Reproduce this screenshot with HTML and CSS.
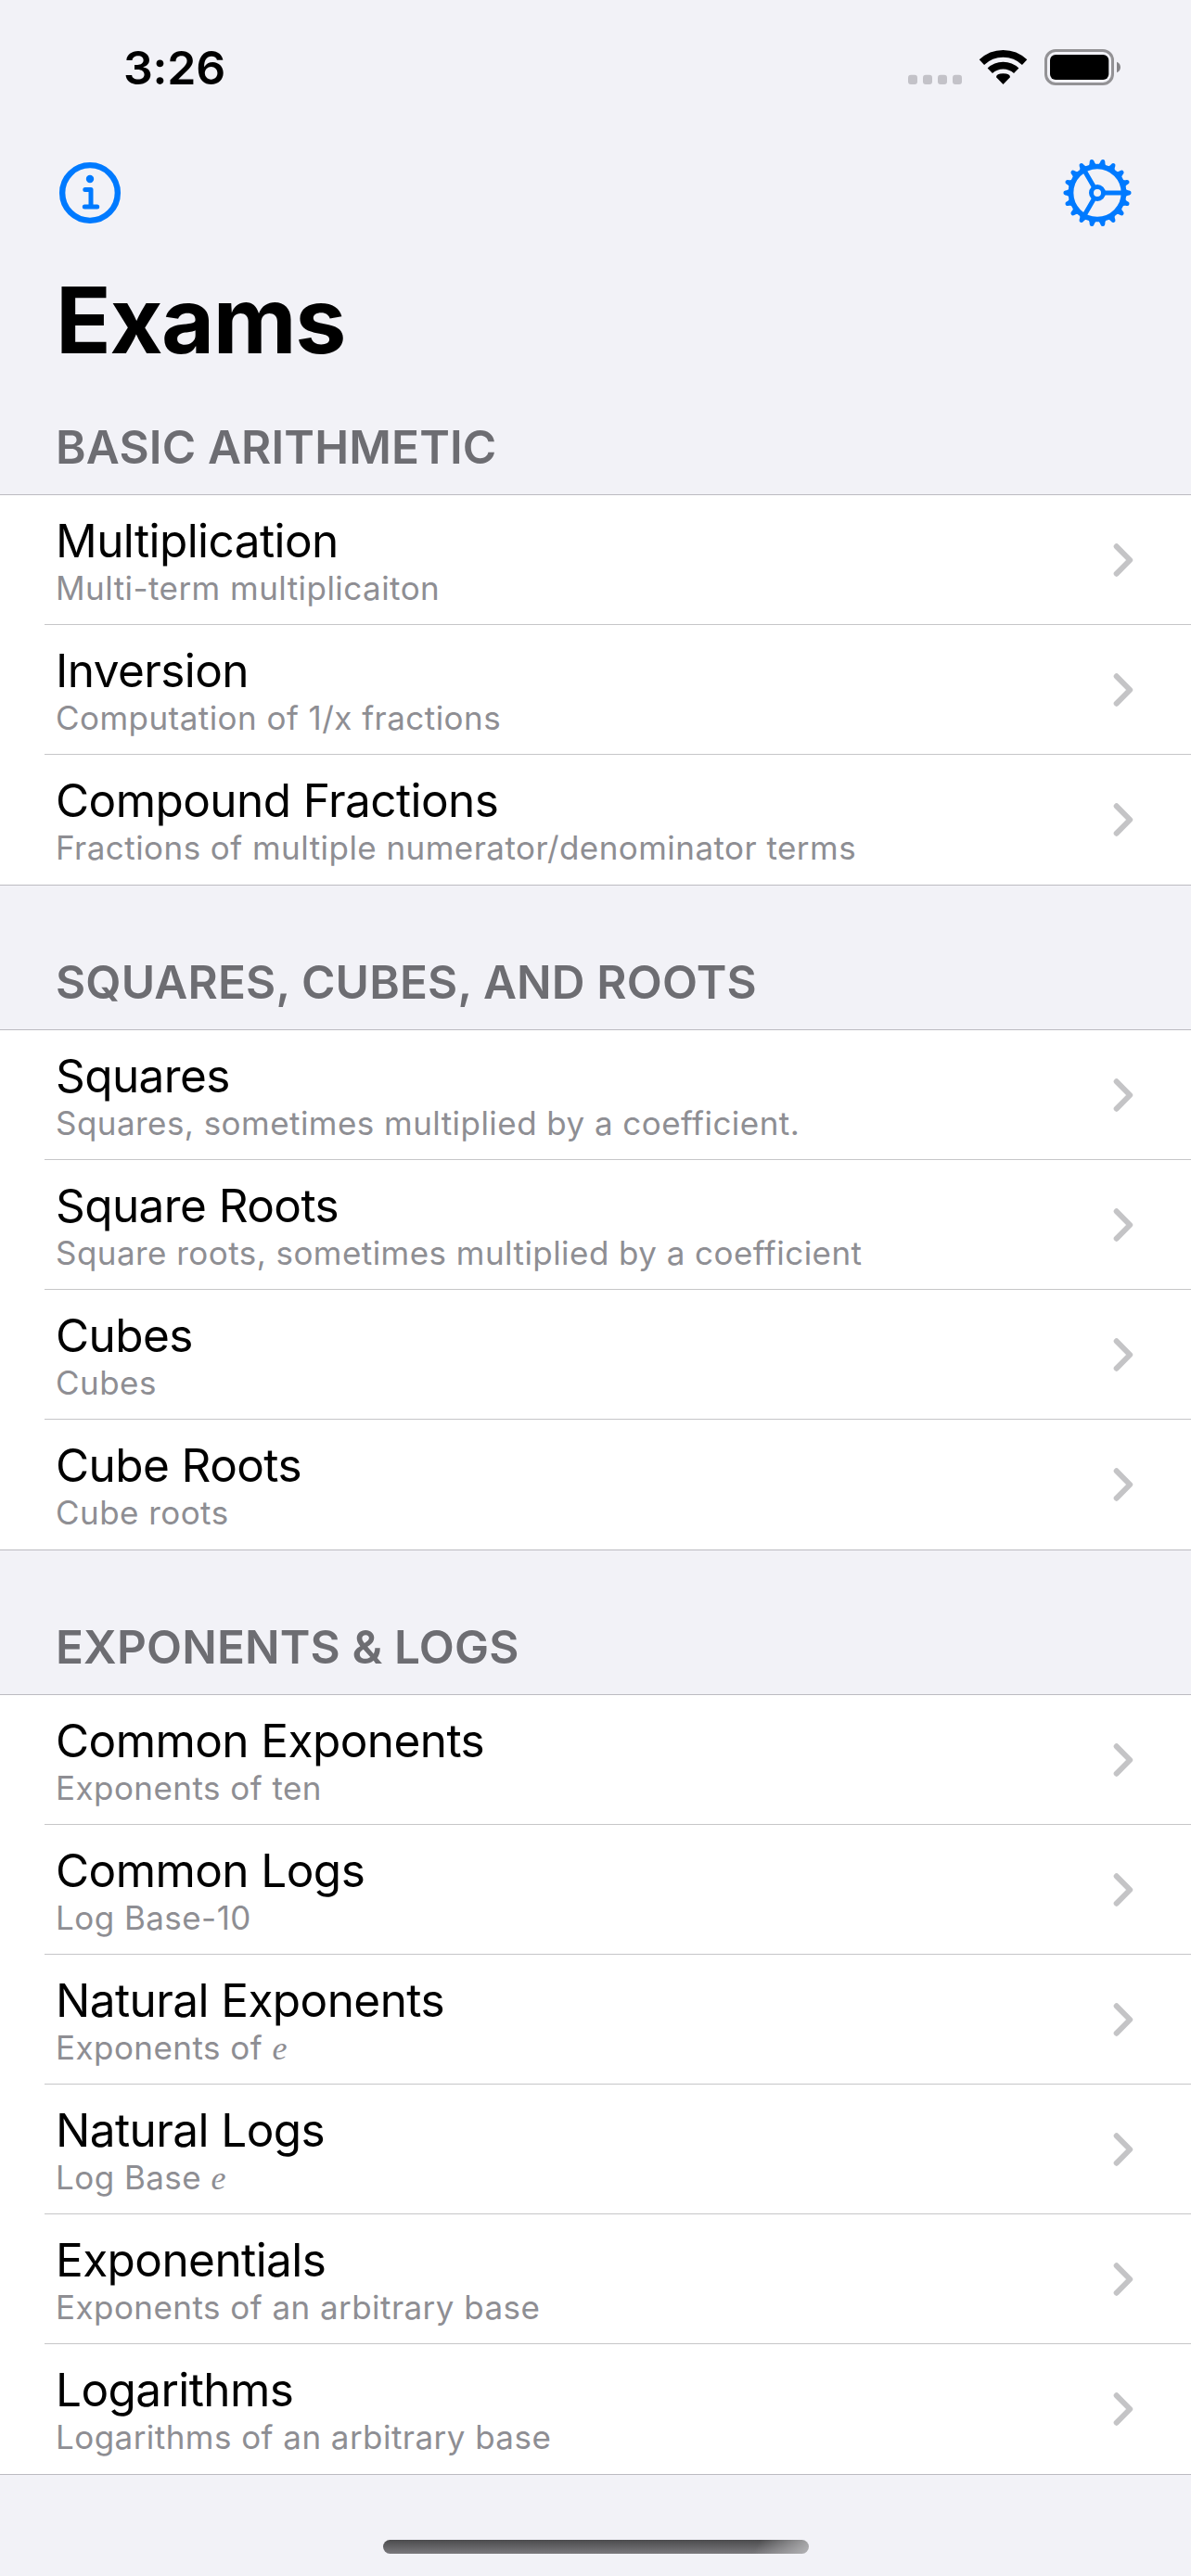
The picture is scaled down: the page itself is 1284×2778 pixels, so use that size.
FILE: index.html
```html
<!DOCTYPE html>
<html lang="en">
<head>
<meta charset="utf-8">
<title>Exams</title>
<link rel="stylesheet" href="styles.css">
</head>
<body>
<svg class="defs" width="0" height="0" aria-hidden="true">
  <symbol id="chevron" viewBox="0 0 24 40"><path d="M5.700 5.300 20.200 20 5.700 34.700" fill="none" stroke="#c4c4c6" stroke-width="6" stroke-linecap="round" stroke-linejoin="round"/></symbol>
</svg>
<div class="screen">
  <header class="status">
    <span class="time">3:26</span>
    <svg class="status-icons" viewBox="0 0 232 44" width="232" height="44" aria-hidden="true">
      <g fill="#c3c2c8">
        <rect x="2" y="30.700" width="10" height="10.300" rx="3"/><rect x="18" y="30.700" width="10" height="10.300" rx="3"/>
        <rect x="34" y="30.700" width="10" height="10.300" rx="3"/><rect x="50" y="30.700" width="10" height="10.300" rx="3"/>
      </g>
      <path d="M81.400 17.100a33.400 33.400 0 0 1 46.200 0M90.300 26.300a20.500 20.500 0 0 1 28.400 0" fill="none" stroke="#000" stroke-width="7.700"/>
      <path d="M104.500 41 97 33.200Q97 29.300 104.500 29.300T112 33.200Z"/>
      <rect x="150.500" y="4.500" width="72" height="36" rx="10.500" fill="none" stroke="#939295" stroke-width="3"/>
      <rect x="155" y="9" width="63.300" height="27" rx="6"/>
      <path d="M227 16.700C232.300 18.600 232.300 26.400 227 28.300Z" fill="#858487"/>
    </svg>
  </header>
  <nav class="nav">
    <svg width="80" height="80" viewBox="-40 -40 80 80" fill="none" stroke="#007aff" stroke-linecap="round" stroke-linejoin="round">
      <circle r="29.850" stroke-width="6.400"/>
      <path d="M-5.200-3.500H1V15M-5.700 15H7.700" stroke-width="5"/>
      <circle cy="-15" r="4.200" fill="#007aff" stroke="none"/>
    </svg>
    <svg width="80" height="80" viewBox="-40 -40 80 80" fill="#007aff">
      <g id="half">
        <g id="third"><path id="tooth" d="M-5-29.500C-3.200-31.300-2.700-32.500-2.400-34.500Q-2-36.600 0-36.600T2.400-34.500C2.700-32.500 3.200-31.300 5-29.500Z" transform="rotate(90)"/><use href="#tooth" transform="rotate(20)"/><use href="#tooth" transform="rotate(40)"/></g>
        <use href="#third" transform="rotate(60)"/><use href="#third" transform="rotate(120)"/>
      </g>
      <use href="#half" transform="rotate(180)"/>
      <g fill="none" stroke="#007aff">
        <circle r="28.500" stroke-width="5.700"/>
        <circle r="6.500" stroke-width="5"/>
        <path d="M8 0H28M-4-6.930-14-24.250M-4 6.930-14 24.250" stroke-width="5"/>
      </g>
    </svg>
  </nav>
  <h1 class="title">Exams</h1>

  <section>
    <h2 class="heading first">BASIC ARITHMETIC</h2>
    <ul class="list">
      <li class="row"><div class="text"><span class="name">Multiplication</span><span class="detail">Multi-term multiplicaiton</span></div><svg class="chev"><use href="#chevron"/></svg></li>
      <li class="row"><div class="text"><span class="name">Inversion</span><span class="detail">Computation of 1/x fractions</span></div><svg class="chev"><use href="#chevron"/></svg></li>
      <li class="row"><div class="text"><span class="name">Compound Fractions</span><span class="detail">Fractions of multiple numerator/denominator terms</span></div><svg class="chev"><use href="#chevron"/></svg></li>
    </ul>
  </section>
  <section>
    <h2 class="heading">SQUARES, CUBES, AND ROOTS</h2>
    <ul class="list">
      <li class="row"><div class="text"><span class="name">Squares</span><span class="detail">Squares, sometimes multiplied by a coefficient.</span></div><svg class="chev"><use href="#chevron"/></svg></li>
      <li class="row"><div class="text"><span class="name">Square Roots</span><span class="detail">Square roots, sometimes multiplied by a coefficient</span></div><svg class="chev"><use href="#chevron"/></svg></li>
      <li class="row"><div class="text"><span class="name">Cubes</span><span class="detail">Cubes</span></div><svg class="chev"><use href="#chevron"/></svg></li>
      <li class="row"><div class="text"><span class="name">Cube Roots</span><span class="detail">Cube roots</span></div><svg class="chev"><use href="#chevron"/></svg></li>
    </ul>
  </section>
  <section>
    <h2 class="heading">EXPONENTS &amp; LOGS</h2>
    <ul class="list">
      <li class="row"><div class="text"><span class="name">Common Exponents</span><span class="detail">Exponents of ten</span></div><svg class="chev"><use href="#chevron"/></svg></li>
      <li class="row"><div class="text"><span class="name">Common Logs</span><span class="detail">Log Base-10</span></div><svg class="chev"><use href="#chevron"/></svg></li>
      <li class="row"><div class="text"><span class="name">Natural Exponents</span><span class="detail">Exponents of <i class="e">e</i></span></div><svg class="chev"><use href="#chevron"/></svg></li>
      <li class="row"><div class="text"><span class="name">Natural Logs</span><span class="detail">Log Base <i class="e">e</i></span></div><svg class="chev"><use href="#chevron"/></svg></li>
      <li class="row"><div class="text"><span class="name">Exponentials</span><span class="detail">Exponents of an arbitrary base</span></div><svg class="chev"><use href="#chevron"/></svg></li>
      <li class="row"><div class="text"><span class="name">Logarithms</span><span class="detail">Logarithms of an arbitrary base</span></div><svg class="chev"><use href="#chevron"/></svg></li>
    </ul>
  </section>
  <footer class="home"><div class="indicator"></div></footer>
</div>
</body>
</html>
```
FILE: styles.css
```css
* { box-sizing: border-box; }
body { margin: 0; background: #f2f2f7; }
.defs { display: block; height: 0; }
.screen {
  width: 1284px;
  height: 2778px;
  display: flex;
  flex-direction: column;
  overflow: hidden;
  font-family: Inter, "Liberation Sans", sans-serif;
  color: #000;
}
.status {
  height: 150px;
  padding: 43px 75px 0 133px;
  display: flex;
  justify-content: space-between;
  align-items: flex-start;
  flex: none;
}
.time {
  font-size: 50px;
  line-height: 60px;
  font-weight: 600;
  letter-spacing: -0.200px;
}
.status-icons { margin-top: 7px; }
.nav {
  height: 116px;
  padding: 17.700px 61.300px 0 57px;
  display: flex;
  justify-content: space-between;
  flex: none;
}
.nav svg { display: block; }
.title {
  margin: 0;
  height: 154px;
  padding: 20px 60px 0;
  font-size: 98.500px;
  line-height: 120px;
  font-weight: 700;
  letter-spacing: -1.400px;
  flex: none;
}
.heading {
  margin: 0;
  height: 155px;
  padding: 74px 60px 0;
  font-size: 49.500px;
  line-height: 60px;
  font-weight: 600;
  letter-spacing: 0.150px;
  color: #6d6d72;
  white-space: nowrap;
}
.heading.first { height: 113px; padding-top: 32px; }
.list {
  margin: 0;
  padding: 0;
  list-style: none;
  background: #fff;
  border-top: 1px solid #bcbbc1;
  border-bottom: 1px solid #bcbbc1;
}
.row {
  height: 140px;
  margin-left: 48px;
  padding: 0 59px 0 12px;
  display: flex;
  align-items: center;
  justify-content: space-between;
  border-bottom: 1px solid #c6c6c8;
}
.row:last-child { border-bottom-color: transparent; }
.text { display: flex; flex-direction: column; white-space: nowrap; }
.name {
  font-size: 49.500px;
  line-height: 58px;
  letter-spacing: -0.580px;
}
.detail {
  padding-top: 1px;
  margin-bottom: -1px;
  font-size: 35px;
  line-height: 42px;
  letter-spacing: 0.450px;
  color: #8e8e93;
}
.e {
  font-family: "Liberation Serif", serif;
  font-size: 36px;
  line-height: 1;
}
.chev { width: 24px; height: 40px; margin-right: 3px; flex: none; }
.home {
  height: 109px;
  padding-top: 70px;
  display: flex;
  justify-content: center;
  flex: none;
}
.indicator {
  width: 459px;
  height: 15px;
  border-radius: 8px;
  background:
    linear-gradient(120deg, rgba(185, 185, 187, 0) 87%, rgba(185, 185, 187, 0.900) 100%),
    linear-gradient(#4b4b4d, #7a797d);
}
```
